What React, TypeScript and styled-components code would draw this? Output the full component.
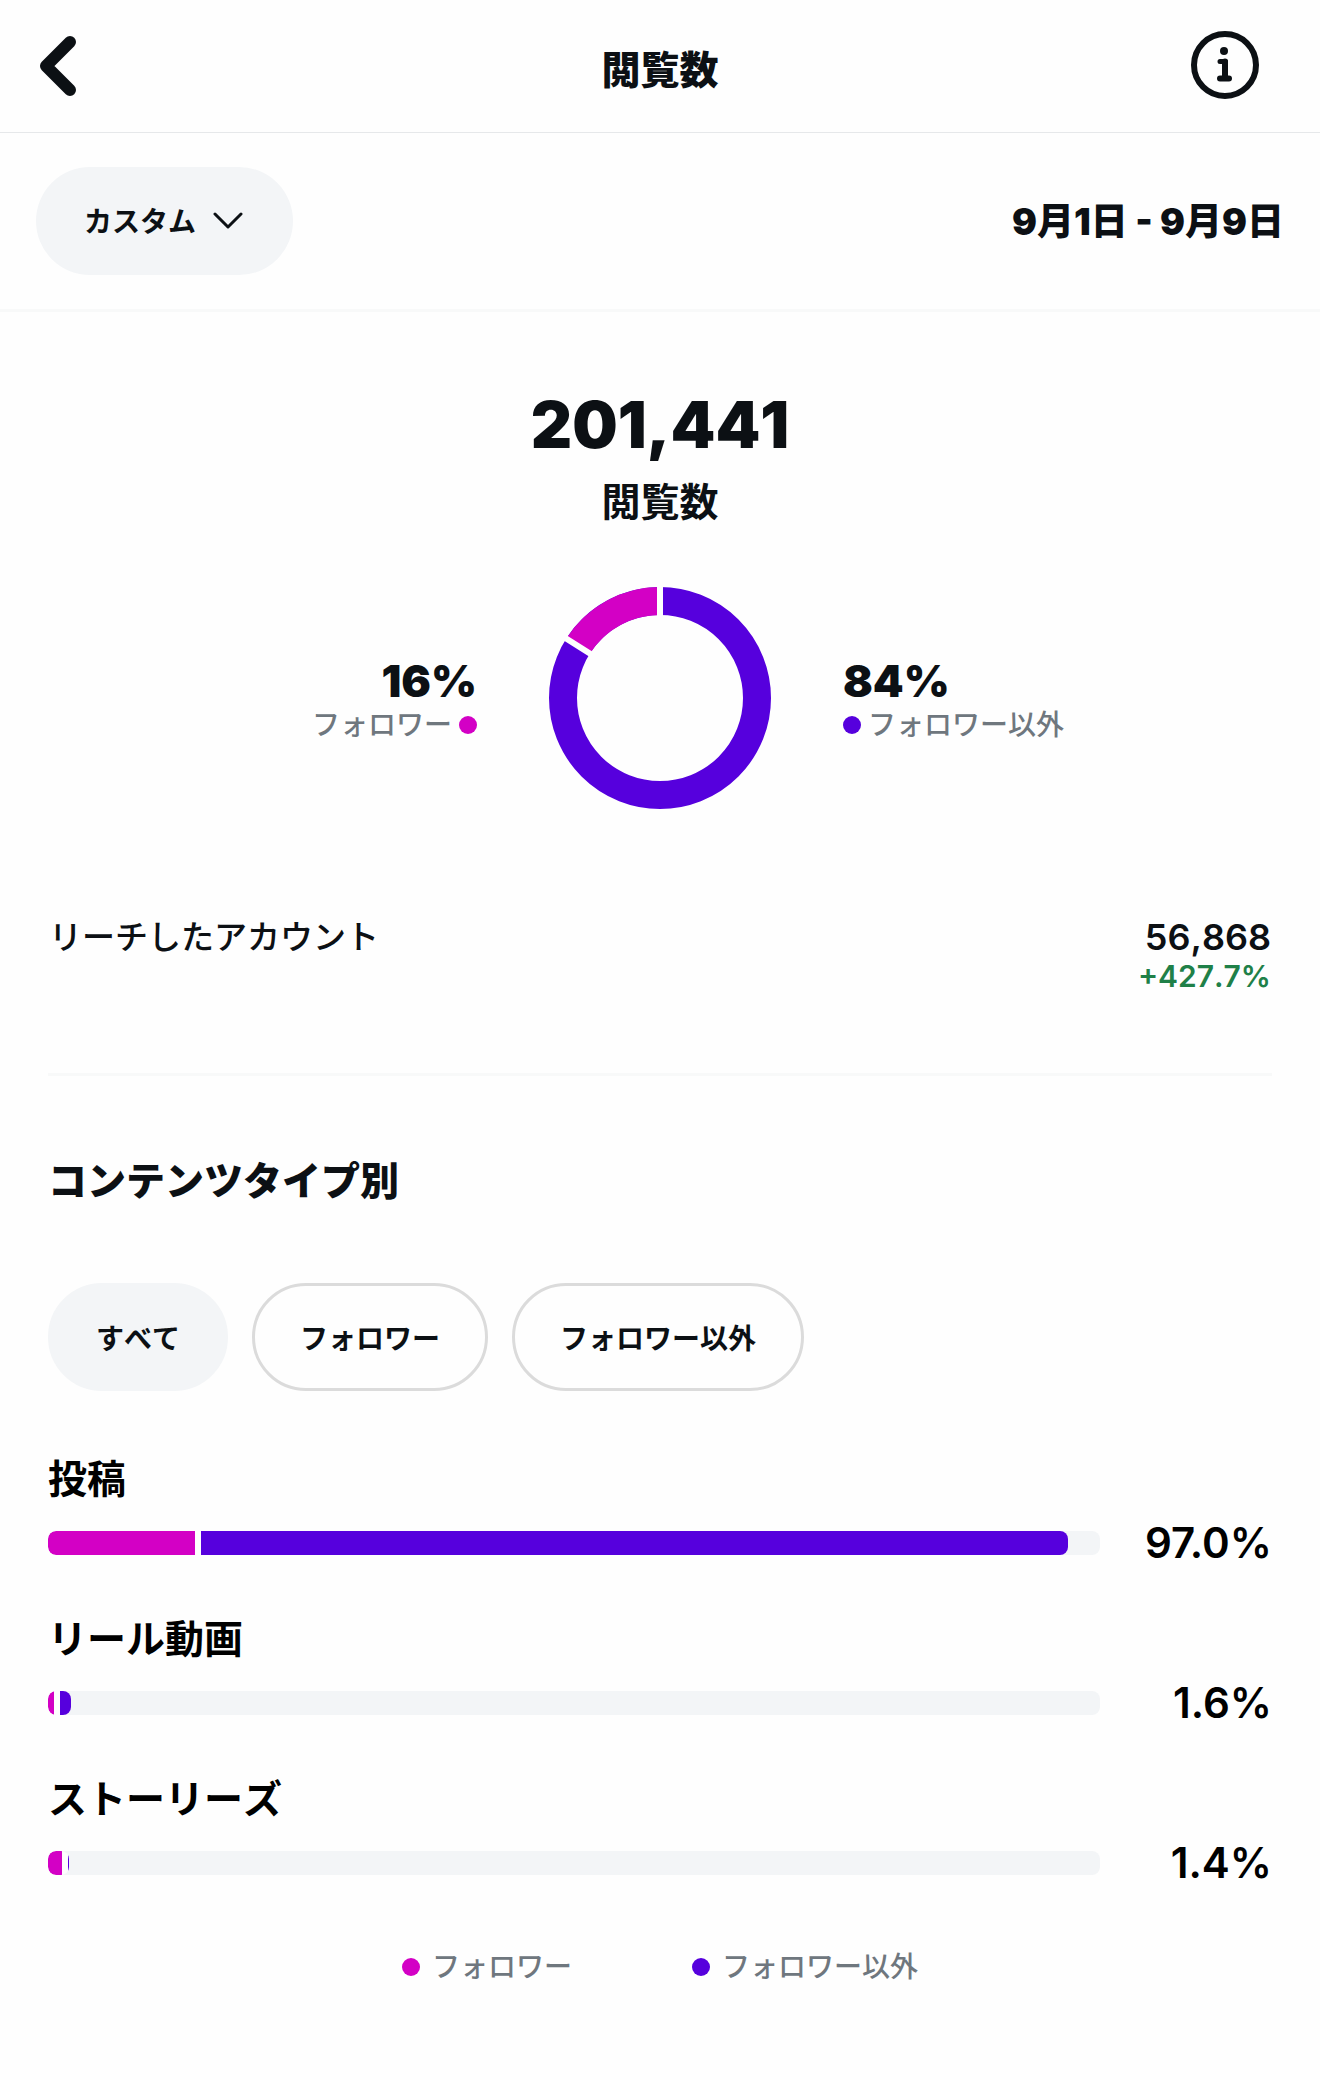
import React, { useState } from 'react';
import styled, { createGlobalStyle } from 'styled-components';

const color = {
  ink: '#0c1014',
  strong: '#000000',
  muted: '#6f777e',
  pink: '#d300c5',
  purple: '#5600dd',
  green: '#1f8048',
  fill: '#f3f5f7',
  page: '#fefefe',
};

const GlobalStyle = createGlobalStyle`
  *, *::before, *::after { box-sizing: border-box; }
  body {
    margin: 0;
    background: ${color.page};
    color: ${color.ink};
    font-family: Inter, "Noto Sans CJK JP", sans-serif;
    font-kerning: none;
  }
  button, select { font: inherit; font-kerning: none; color: inherit; }
  h1, h2, h3, p, dl, dd, dt, ul { margin: 0; padding: 0; }
`;

const Header = styled.header`
  display: grid;
  grid-template-columns: 1fr auto 1fr;
  align-items: center;
  height: 133px;
  padding: 0 36px;
  border-bottom: 1px solid #e6e8ea;
`;

const IconButton = styled.button<{ $end?: boolean }>`
  display: flex;
  justify-self: ${(p) => (p.$end ? 'end' : 'start')};
  padding: ${(p) => (p.$end ? '0 24px 2px 0' : '0')};
  border: 0;
  background: none;
  cursor: pointer;
`;

const Title = styled.h1`
  padding-top: 8px;
  font-size: 39px;
  line-height: 52px;
  font-weight: 900;
`;

const FilterBar = styled.div`
  display: flex;
  align-items: center;
  justify-content: space-between;
  padding: 34px 36px;
  border-bottom: 3px solid #f8f9f9;
`;

const PeriodPill = styled.label`
  display: flex;
  align-items: center;
  gap: 16px;
  height: 108px;
  padding: 0 50px 0 48px;
  border-radius: 54px;
  background: ${color.fill};
`;

const PeriodSelect = styled.select`
  appearance: none;
  padding: 2px 0 0;
  border: 0;
  background: none;
  font-size: 28px;
  line-height: 40px;
  font-weight: 700;
`;

const DateRange = styled.p`
  padding-top: 2px;
  font-size: 37px;
  line-height: 48px;
  font-weight: 900;
`;

const Content = styled.main`
  padding: 0 48px 72px;
`;

const Summary = styled.section`
  display: flex;
  flex-direction: column;
  align-items: center;
  padding-top: 77px;
`;

const Total = styled.p`
  font-size: 64px;
  line-height: 72px;
  font-weight: 900;
`;

const TotalLabel = styled.h2`
  margin-top: 15px;
  font-size: 39px;
  line-height: 52px;
  font-weight: 600;
`;

const Split = styled.div`
  display: grid;
  grid-template-columns: 1fr auto 1fr;
  align-items: center;
  gap: 72px;
  width: 100%;
  margin-top: 59px;
`;

const Share = styled.div<{ $side: 'left' | 'right' }>`
  display: flex;
  flex-direction: column;
  align-items: ${(p) => (p.$side === 'left' ? 'flex-end' : 'flex-start')};
  padding-top: 5px;
`;

const ShareValue = styled.p`
  font-size: 44px;
  line-height: 48px;
  font-weight: 900;
`;

const Key = styled.p<{ $gap: number; $reverse?: boolean }>`
  display: flex;
  flex-direction: ${(p) => (p.$reverse ? 'row-reverse' : 'row')};
  align-items: center;
  gap: ${(p) => p.$gap}px;
  color: ${color.muted};
  font-size: 28px;
  line-height: 40px;
  font-weight: 500;
`;

const Dot = styled.span<{ $color: string }>`
  width: 18px;
  height: 18px;
  border-radius: 50%;
  background: ${(p) => p.$color};
`;

const Metric = styled.dl`
  display: flex;
  justify-content: space-between;
  margin-top: 106px;
  padding: 0 1px 80px;
  border-bottom: 3px solid #f8f9f9;
`;

const MetricName = styled.dt`
  font-size: 33px;
  line-height: 44px;
  font-weight: 500;
`;

const MetricValue = styled.dd`
  font-size: 36px;
  line-height: 44px;
  font-weight: 600;
  text-align: right;
`;

const Change = styled.p`
  color: ${color.green};
  font-size: 30px;
  line-height: 34px;
`;

const SectionTitle = styled.h2`
  margin-top: 77px;
  font-size: 39px;
  line-height: 56px;
  font-weight: 900;
`;

const Chips = styled.div`
  display: flex;
  flex-wrap: wrap;
  gap: 24px;
  margin-top: 74px;
`;

const Chip = styled.button<{ $active: boolean }>`
  height: 108px;
  padding: 3px 45px 0;
  border: 3px solid ${(p) => (p.$active ? color.fill : '#dbdbdb')};
  border-radius: 54px;
  background: ${(p) => (p.$active ? color.fill : 'transparent')};
  font-size: 28px;
  line-height: 40px;
  font-weight: 700;
  cursor: pointer;
`;

const Rows = styled.ul`
  display: grid;
  gap: 46px;
  margin-top: 62px;
  list-style: none;
  color: ${color.strong};
`;

const RowName = styled.h3`
  font-size: 39px;
  line-height: 52px;
  font-weight: 600;
`;

const RowBody = styled.div`
  display: grid;
  grid-template-columns: 1fr 172px;
  align-items: center;
  margin-top: 14px;
`;

const RowValue = styled.span`
  font-size: 42px;
  line-height: 48px;
  font-weight: 600;
  font-kerning: normal;
  text-align: right;
`;

const Track = styled.div`
  display: flex;
  height: 24px;
  border-radius: 8px;
  background: ${color.fill};
  overflow: hidden;
`;

const Fill = styled.div`
  display: flex;
  gap: 6px;
  border-radius: 8px;
  background: ${color.page};
  overflow: hidden;
`;

const Segment = styled.span<{ $color: string }>`
  background: ${(p) => p.$color};
`;

const Legend = styled.div`
  display: flex;
  justify-content: center;
  gap: 120px;
  margin-top: 60px;
`;

const types = [
  { name: '投稿', value: 97.0, followers: 14.06 },
  { name: 'リール動画', value: 1.6, followers: 0.57 },
  { name: 'ストーリーズ', value: 1.4, followers: 1.3 },
];

function Donut({ share }: { share: number }) {
  const length = 2 * Math.PI * 97;
  const angle = -share * 2 * Math.PI;
  return (
    <svg width="222" height="222" viewBox="-111 -111 222 222" role="img" aria-label="16% / 84%">
      <circle r="97" fill="none" stroke={color.purple} strokeWidth="28" />
      <circle
        r="97"
        fill="none"
        stroke={color.pink}
        strokeWidth="28"
        strokeDasharray={`${length * share} ${length}`}
        transform={`rotate(${-90 - share * 360})`}
      />
      <path
        d={`M0 -76V-114M${76 * Math.sin(angle)} ${-76 * Math.cos(angle)}L${114 * Math.sin(angle)} ${-114 * Math.cos(angle)}`}
        stroke={color.page}
        strokeWidth="6"
      />
    </svg>
  );
}

function TypeRow({ name, value, followers }: (typeof types)[number]) {
  const part = (followers / value) * 100;
  return (
    <li>
      <RowName>{name}</RowName>
      <RowBody>
        <Track>
          <Fill style={{ width: `calc(${value}% + ${value < 10 ? 6 : 0}px)` }}>
            <Segment $color={color.pink} style={{ flex: part }} />
            <Segment $color={color.purple} style={{ flex: 100 - part }} />
          </Fill>
        </Track>
        <RowValue>{value.toFixed(1)}%</RowValue>
      </RowBody>
    </li>
  );
}

const filters = ['すべて', 'フォロワー', 'フォロワー以外'];

export default function App() {
  const [active, setActive] = useState(filters[0]);
  return (
    <>
      <GlobalStyle />
      <Header>
        <IconButton aria-label="戻る">
          <svg width="44" height="64" viewBox="0 0 44 64" fill="none" stroke={color.ink} strokeWidth="12" strokeLinecap="round" strokeLinejoin="round">
            <path d="M34 8L10 32L34 56" />
          </svg>
        </IconButton>
        <Title>閲覧数</Title>
        <IconButton $end aria-label="詳細">
          <svg width="70" height="70" viewBox="0 0 70 70" fill="none" stroke={color.ink} strokeLinecap="round" strokeLinejoin="round">
            <circle cx="35" cy="35" r="31" strokeWidth="6" />
            <circle cx="34" cy="21" r="4" fill={color.ink} stroke="none" />
            <path d="M30 31.5H35.5V48" strokeWidth="5" />
            <path d="M35 31.5V48M30 48.5H39" strokeWidth="6" />
          </svg>
        </IconButton>
      </Header>
      <FilterBar>
        <PeriodPill>
          <PeriodSelect aria-label="期間">
            <option>カスタム</option>
          </PeriodSelect>
          <svg width="30" height="20" viewBox="0 0 30 20" fill="none" stroke={color.ink} strokeWidth="3" strokeLinecap="round" strokeLinejoin="round">
            <path d="M2 3L15 16L28 3" />
          </svg>
        </PeriodPill>
        <DateRange>9月1日 - 9月9日</DateRange>
      </FilterBar>
      <Content>
        <Summary>
          <Total>201,441</Total>
          <TotalLabel>閲覧数</TotalLabel>
          <Split>
            <Share $side="left">
              <ShareValue>16%</ShareValue>
              <Key $gap={7} $reverse>
                <Dot $color={color.pink} />
                フォロワー
              </Key>
            </Share>
            <Donut share={0.16} />
            <Share $side="right">
              <ShareValue>84%</ShareValue>
              <Key $gap={7}>
                <Dot $color={color.purple} />
                フォロワー以外
              </Key>
            </Share>
          </Split>
        </Summary>
        <Metric>
          <MetricName>リーチしたアカウント</MetricName>
          <MetricValue>
            56,868
            <Change>+427.7%</Change>
          </MetricValue>
        </Metric>
        <SectionTitle>コンテンツタイプ別</SectionTitle>
        <Chips>
          {filters.map((name) => (
            <Chip key={name} $active={name === active} aria-pressed={name === active} onClick={() => setActive(name)}>
              {name}
            </Chip>
          ))}
        </Chips>
        <Rows>
          {types.map((type) => (
            <TypeRow key={type.name} {...type} />
          ))}
        </Rows>
        <Legend>
          <Key $gap={12}>
            <Dot $color={color.pink} />
            フォロワー
          </Key>
          <Key $gap={12}>
            <Dot $color={color.purple} />
            フォロワー以外
          </Key>
        </Legend>
      </Content>
    </>
  );
}
